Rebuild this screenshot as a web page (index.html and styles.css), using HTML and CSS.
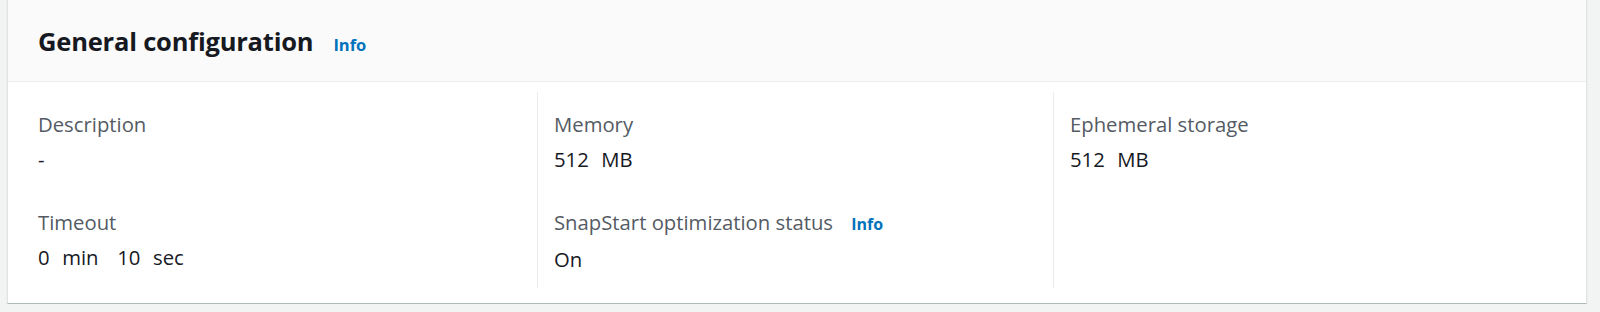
FILE: index.html
```html
<!DOCTYPE html>
<html lang="en">

<head>
    <meta charset="UTF-8">
    <meta name="viewport" content="width=device-width, initial-scale=1.0">
    <title>General configuration</title>
    <link rel="stylesheet" href="styles.css">
</head>

<body>
    <section class="config-card">
        <header class="card-header">
            <h2>General configuration</h2>
            <a class="info-link" href="#">Info</a>
        </header>

        <div class="card-body">
            <div class="column first">
                <div class="field">
                    <div class="label">Description</div>
                    <div class="value">-</div>
                </div>
                <div class="field">
                    <div class="label">Timeout</div>
                    <div class="value">0&nbsp;&nbsp;min&nbsp;&nbsp;&nbsp;10&nbsp;&nbsp;sec</div>
                </div>
            </div>

            <div class="column">
                <div class="field">
                    <div class="label">Memory</div>
                    <div class="value">512&nbsp;&nbsp;MB</div>
                </div>
                <div class="field">
                    <div class="label">SnapStart optimization status <a class="info-link small" href="#">Info</a></div>
                    <div class="value">On</div>
                </div>
            </div>

            <div class="column">
                <div class="field">
                    <div class="label">Ephemeral storage</div>
                    <div class="value">512&nbsp;&nbsp;MB</div>
                </div>
            </div>
        </div>
    </section>
</body>

</html>
```

FILE: styles.css
```css
:root {
    --text-color: #16191f;
    --label-color: #545b64;
    --link-color: #0073bb;
    --divider: #eaeded;
}

body {
    font-family: "Open Sans", "Noto Sans", Arial, sans-serif;
    background-color: #f2f3f3;
    margin: 0;
    padding: 0;
    color: var(--text-color);
}

.config-card {
    width: 1580px;
    margin-left: 7px;
    box-sizing: border-box;
    background-color: white;
    border-left: 1px solid #dfe3e3;
    border-right: 1px solid #dfe3e3;
    border-bottom: 1px solid #b0b9b9;
    box-shadow: 0 1px 1px rgba(0, 28, 36, 0.12);
}

.card-header {
    display: flex;
    align-items: baseline;
    height: 82px;
    box-sizing: border-box;
    padding: 24px 20px 0 30px;
    background-color: #fafafa;
    border-bottom: 1px solid var(--divider);
}

.card-header h2 {
    margin: 0;
    font-size: 25.5px;
    line-height: 34px;
    font-weight: 700;
    letter-spacing: -0.2px;
}

.info-link {
    color: var(--link-color);
    font-weight: 700;
    font-size: 16.5px;
    text-decoration: none;
    margin-left: 20px;
}

.info-link.small {
    font-size: 16px;
    margin-left: 13px;
}

.card-body {
    display: grid;
    grid-template-columns: repeat(3, 516px);
    padding: 10px 17px 15px 13px;
}

.column {
    display: flex;
    flex-direction: column;
    gap: 35px;
    height: 196px;
    box-sizing: border-box;
    padding: 18px 0 0 16px;
    border-left: 1px solid var(--divider);
}

.column.first {
    border-left-color: transparent;
}

.field {
    display: flex;
    flex-direction: column;
    gap: 7px;
}

.label,
.value {
    font-size: 20.3px;
    line-height: 28px;
}

.label {
    color: var(--label-color);
}

.value {
    word-spacing: 1px;
}
```
